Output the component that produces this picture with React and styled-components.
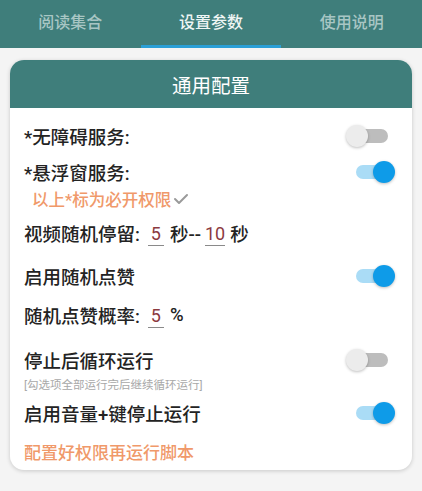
import styled, { createGlobalStyle } from "styled-components";

const GlobalStyle = createGlobalStyle`
  html, body {
    margin: 0;
    padding: 0;
    background: #f4f4f4;
    font-family: Roboto, "Noto Sans CJK SC", sans-serif;
  }
`;

const Page = styled.div`
  width: 422px;
  height: 491px;
  background: #f4f4f4;
  overflow: hidden;
`;

const TabBar = styled.div`
  display: flex;
  height: 48px;
  background: #3f7e7b;
`;

const Tab = styled.div`
  flex: 1;
  display: flex;
  align-items: center;
  justify-content: center;
  padding-bottom: 3px;
  font-size: 16px;
  font-weight: 500;
  color: ${(props) => (props.active ? "#eef5f4" : "#a8c6c4")};
  border-bottom: 3px solid ${(props) => (props.active ? "#2a9fd6" : "transparent")};
  box-sizing: border-box;
`;

const Card = styled.div`
  margin: 12px 10px 0 10px;
  background: #ffffff;
  border-radius: 14px;
  box-shadow: 0 1px 4px rgba(0, 0, 0, 0.18);
  overflow: hidden;
`;

const CardHeader = styled.div`
  height: 48px;
  background: #3f7e7b;
  color: #ffffff;
  font-size: 19.5px;
  display: flex;
  align-items: center;
  justify-content: center;
`;

const CardBody = styled.div`
  display: flex;
  flex-direction: column;
  padding: 10px 17px 7px 14px;
`;

const Row = styled.div`
  height: ${(props) => props.h || 36}px;
  margin-top: ${(props) => props.mt || 0}px;
  display: flex;
  align-items: center;
  justify-content: space-between;
  font-size: 18.5px;
  font-weight: 500;
  color: #232323;
`;

const Field = styled.div`
  display: flex;
  align-items: center;
  white-space: nowrap;
`;

const NumInput = styled.span`
  display: inline-flex;
  justify-content: center;
  align-items: center;
  min-width: ${(props) => props.w || 16}px;
  height: 26px;
  margin: 0 ${(props) => props.mr || 6}px 0 ${(props) => props.ml || 8}px;
  padding-top: 2px;
  font-size: 18px;
  font-weight: 400;
  color: #8c3a3f;
  border-bottom: 1.5px solid #8a8a8a;
  box-sizing: border-box;
`;

const Note = styled.div`
  height: ${(props) => props.h || 18}px;
  margin-top: ${(props) => props.mt || 0}px;
  padding-left: ${(props) => props.indent || 0}px;
  display: flex;
  align-items: center;
  font-size: ${(props) => props.size || 16.5}px;
  font-weight: 500;
  color: #f0996a;
`;

const Hint = styled.div`
  height: 12px;
  display: flex;
  align-items: center;
  font-size: 11.5px;
  color: #a8a8a8;
  white-space: nowrap;
`;

const Track = styled.div`
  position: relative;
  width: 32px;
  height: 14px;
  margin-right: 7px;
  border-radius: 7px;
  background: ${(props) => (props.on ? "#aadcf6" : "#bdbdbd")};
`;

const Thumb = styled.div`
  position: absolute;
  top: -4px;
  left: ${(props) => (props.on ? "17px" : "-10px")};
  width: 22px;
  height: 22px;
  border-radius: 50%;
  background: ${(props) => (props.on ? "#0e9be8" : "#ececec")};
  box-shadow: 0 1px 3px rgba(0, 0, 0, 0.25);
`;

function Switch({ on }) {
  return (
    <Track on={on}>
      <Thumb on={on} />
    </Track>
  );
}

function Check() {
  return (
    <svg width="16" height="14" viewBox="0 0 16 14" style={{ marginLeft: 2 }}>
      <polyline
        points="2,7 6,11 14,3"
        fill="none"
        stroke="#9a9a9a"
        strokeWidth="2"
        strokeLinecap="round"
        strokeLinejoin="round"
      />
    </svg>
  );
}

const tabs = ["阅读集合", "设置参数", "使用说明"];

export default function App() {
  return (
    <Page>
      <GlobalStyle />
      <TabBar>
        {tabs.map((t, i) => (
          <Tab key={t} active={i === 1}>
            {t}
          </Tab>
        ))}
      </TabBar>
      <Card>
        <CardHeader>通用配置</CardHeader>
        <CardBody>
          <Row>
            <span>*无障碍服务:</span>
            <Switch on={false} />
          </Row>
          <Row>
            <span>*悬浮窗服务:</span>
            <Switch on />
          </Row>
          <Note indent={8}>
            以上*标为必开权限
            <Check />
          </Note>
          <Row h={50}>
            <Field>
              视频随机停留:
              <NumInput>5</NumInput>
              秒--
              <NumInput w={20} ml={4} mr={5}>
                10
              </NumInput>
              秒
            </Field>
          </Row>
          <Row>
            <span>启用随机点赞</span>
            <Switch on />
          </Row>
          <Row h={42}>
            <Field>
              随机点赞概率:
              <NumInput>5</NumInput>
              %
            </Field>
          </Row>
          <Row mt={6}>
            <span>停止后循环运行</span>
            <Switch on={false} />
          </Row>
          <Hint>[勾选项全部运行完后继续循环运行]</Hint>
          <Row mt={5}>
            <span>启用音量+键停止运行</span>
            <Switch on />
          </Row>
          <Note h={24} mt={8} size={17}>
            配置好权限再运行脚本
          </Note>
        </CardBody>
      </Card>
    </Page>
  );
}
